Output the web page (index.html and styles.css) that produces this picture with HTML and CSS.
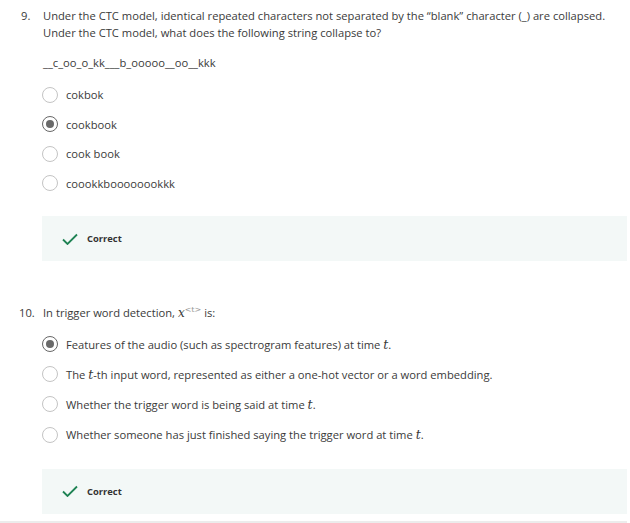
FILE: index.html
```html
<!DOCTYPE html>
<html>
<head>
<meta charset="utf-8">
<link rel="stylesheet" href="styles.css">
</head>
<body>
<div class="page">
  <section class="question q9">
    <div class="qhead">
      <span class="num">9.</span>
      <div class="prompt">
        <p>Under the CTC model, identical repeated characters not separated by the “blank” character (_) are collapsed.<br>Under the CTC model, what does the following string collapse to?</p>
        <p class="code">__c_oo_o_kk___b_ooooo__oo__kkk</p>
      </div>
    </div>
    <ul class="options">
      <li><span class="radio"></span><span>cokbok</span></li>
      <li><span class="radio checked"></span><span>cookbook</span></li>
      <li><span class="radio"></span><span>cook book</span></li>
      <li><span class="radio"></span><span>coookkboooooookkk</span></li>
    </ul>
    <div class="feedback">
      <svg class="check" width="16" height="12" viewBox="0 0 16 12"><path d="M1 6.5 L5.5 11 L15 1.5" fill="none" stroke="#1f8354" stroke-width="1.8"/></svg>
      <span>Correct</span>
    </div>
  </section>

  <section class="question q10">
    <div class="qhead">
      <span class="num">10.</span>
      <div class="prompt">
        <p>In trigger word detection, <span class="math">x<sup>&lt;t&gt;</sup></span> is:</p>
      </div>
    </div>
    <ul class="options">
      <li><span class="radio checked"></span><span>Features of the audio (such as spectrogram features) at time <i class="m">t</i>.</span></li>
      <li><span class="radio"></span><span>The <i class="m">t</i>-th input word, represented as either a one-hot vector or a word embedding.</span></li>
      <li><span class="radio"></span><span>Whether the trigger word is being said at time <i class="m">t</i>.</span></li>
      <li><span class="radio"></span><span>Whether someone has just finished saying the trigger word at time <i class="m">t</i>.</span></li>
    </ul>
    <div class="feedback">
      <svg class="check" width="16" height="12" viewBox="0 0 16 12"><path d="M1 6.5 L5.5 11 L15 1.5" fill="none" stroke="#1f8354" stroke-width="1.8"/></svg>
      <span>Correct</span>
    </div>
  </section>
  <div class="rule"></div>
</div>
</body>
</html>
```
FILE: styles.css
```css
* { box-sizing: border-box; }
html, body { margin: 0; padding: 0; background: #fff; }
body {
  font-family: "Open Sans", "Liberation Sans", sans-serif;
  font-size: 11.2px;
  color: #3a3a3a;
  width: 630px;
  height: 523px;
  overflow: hidden;
}
.page { padding: 7px 3px 0 0; }
.qhead { display: flex; align-items: baseline; }
.num { width: 43px; padding-left: 21px; line-height: 17px; flex: none; }
.q10 .num { padding-left: 19px; }
.prompt p { margin: 0; line-height: 17px; }
.prompt .code { margin-top: 13px; }
.options { list-style: none; margin: 9px 0 0 42px; padding: 0; }
.options li { display: flex; align-items: center; height: 29.5px; }
.radio {
  width: 16px; height: 16px; border-radius: 50%;
  border: 1.2px solid #c4c4c4; margin-right: 8px; flex: none;
  display: flex; align-items: center; justify-content: center;
}
.radio.checked { border: 1.6px solid #666; }
.radio.checked::after { content: ""; width: 8px; height: 8px; border-radius: 50%; background: #6a6a6a; }
.feedback {
  margin: 18px 0 0 42px;
  height: 45px;
  background: #f3f8f7;
  display: flex; align-items: center;
  padding-left: 20px;
  font-size: 9.4px; font-weight: 700; color: #333;
}
.check { margin-right: 9px; }
.q10 { margin-top: 40px; }
.q10 .options { margin-top: 7px; }
.q10 .options li { height: 30.2px; }
.q10 .feedback { margin-top: 19px; }
.math { font-family: "DejaVu Serif", serif; font-style: italic; font-size: 12px; }
.math sup { font-size: 8px; font-style: normal; color: #999; vertical-align: 5px; }
.m { font-family: "DejaVu Serif", serif; font-size: 12.5px; }
.rule { height: 2px; background: #ececec; margin-top: 7px; }
```
